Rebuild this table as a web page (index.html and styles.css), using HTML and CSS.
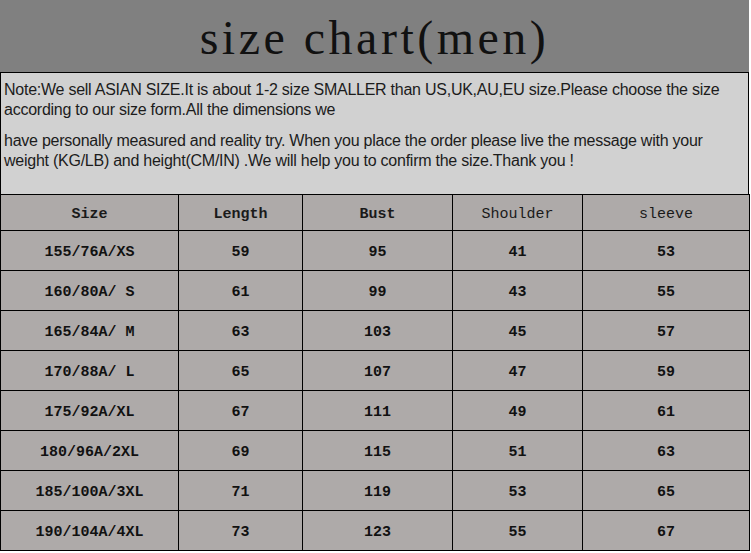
FILE: index.html
```html
<!DOCTYPE html>
<html>
<head>
<meta charset="utf-8">
<link rel="stylesheet" href="styles.css">
</head>
<body>
<div class="chart">
  <div class="title-bar"><h1 class="title">size chart(men)</h1></div>
  <div class="note">
    <p>Note:We sell ASIAN SIZE.It is about 1-2 size SMALLER than US,UK,AU,EU size.Please choose the size<br>according to our size form.All the dimensions we</p>
    <p>have personally measured and reality try. When you place the order please live the message with your<br>weight (KG/LB) and height(CM/IN) .We will help you to confirm the size.Thank you !</p>
  </div>
  <table class="size-table">
    <colgroup>
      <col class="c1"><col class="c2"><col class="c3"><col class="c4"><col class="c5">
    </colgroup>
    <thead>
      <tr><th class="b">Size</th><th class="b">Length</th><th class="b">Bust</th><th>Shoulder</th><th>sleeve</th></tr>
    </thead>
    <tbody>
      <tr><td>155/76A/XS</td><td>59</td><td>95</td><td>41</td><td>53</td></tr>
      <tr><td>160/80A/ S</td><td>61</td><td>99</td><td>43</td><td>55</td></tr>
      <tr><td>165/84A/ M</td><td>63</td><td>103</td><td>45</td><td>57</td></tr>
      <tr><td>170/88A/ L</td><td>65</td><td>107</td><td>47</td><td>59</td></tr>
      <tr><td>175/92A/XL</td><td>67</td><td>111</td><td>49</td><td>61</td></tr>
      <tr><td>180/96A/2XL</td><td>69</td><td>115</td><td>51</td><td>63</td></tr>
      <tr><td>185/100A/3XL</td><td>71</td><td>119</td><td>53</td><td>65</td></tr>
      <tr><td>190/104A/4XL</td><td>73</td><td>123</td><td>55</td><td>67</td></tr>
    </tbody>
  </table>
</div>
</body>
</html>
```
FILE: styles.css
```css
html, body {
  margin: 0;
  padding: 0;
  background: #ffffff;
}

.chart {
  width: 749px;
}

.title-bar {
  box-sizing: border-box;
  height: 73px;
  background: #808080;
  border-bottom: 1px solid #000;
  display: flex;
  justify-content: center;
}

.title {
  margin: 0;
  padding-top: 3px;
  font-family: "Liberation Serif", "Times New Roman", serif;
  font-weight: normal;
  font-size: 48px;
  line-height: 69px;
  letter-spacing: 3.5px;
  color: #111;
  white-space: pre;
}

.note {
  box-sizing: border-box;
  height: 121px;
  background: #d1d1d1;
  border-left: 1px solid #000;
  border-right: 1px solid #000;
  padding: 7px 3px 0 3px;
  font-family: "Liberation Sans", Arial, sans-serif;
  font-size: 16px;
  letter-spacing: -0.25px;
  line-height: 20px;
  color: #1c1c1c;
  white-space: nowrap;
}

.note p {
  margin: 0 0 11px 0;
}

.size-table {
  width: 749px;
  border-collapse: collapse;
  table-layout: fixed;
  background: #aeaaa9;
  font-family: "Liberation Mono", "Courier New", monospace;
  font-size: 15px;
  color: #111;
}

.c1 { width: 178px; }
.c2 { width: 124px; }
.c3 { width: 150px; }
.c4 { width: 130px; }
.c5 { width: 167px; }

.size-table th,
.size-table td {
  border: 1px solid #000;
  padding: 0;
  text-align: center;
  white-space: pre;
}

.size-table th {
  height: 31px;
  font-weight: normal;
  padding-top: 4px;
  color: #1a1a1a;
}

.size-table th.b {
  font-weight: bold;
}

.size-table td {
  height: 36px;
  font-weight: bold;
  padding-top: 3px;
}
```
